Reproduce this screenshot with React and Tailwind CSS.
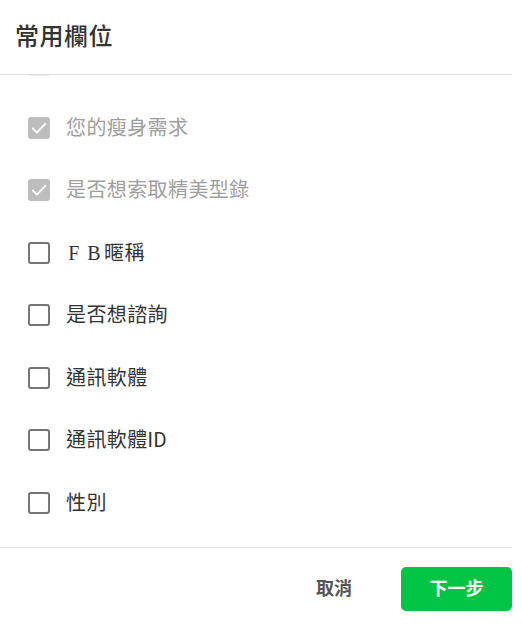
import React from "react";

const items = [
  { label: "", checked: true },
  { label: "您的瘦身需求", checked: true },
  { label: "是否想索取精美型錄", checked: true },
  { label: "FB", fb: true, checked: false },
  { label: "是否想諮詢", checked: false },
  { label: "通訊軟體", checked: false },
  { label: "通訊軟體ID", checked: false },
  { label: "性別", checked: false },
];

function Box({ checked, faint }) {
  if (checked) {
    return (
      <div className={"w-[22px] h-[22px] rounded-[3px] flex items-center justify-center shrink-0 " + (faint ? "bg-[#e8e8e8]" : "bg-[#bdbdbd]")}>
        <svg width="20" height="20" viewBox="0 0 24 24">
          <path d="M4.5 12.5l5 5 10-10.5" fill="none" stroke="#fff" strokeWidth="2.3" strokeLinecap="round" strokeLinejoin="round" />
        </svg>
      </div>
    );
  }
  return <div className="w-[22px] h-[22px] rounded-[3px] border-2 border-[#757575] shrink-0" />;
}

export default function App() {
  return (
    <div
      className="w-[512px] h-[630px] bg-white flex flex-col"
      style={{ fontFamily: "Roboto, 'Noto Sans CJK TC', sans-serif" }}
    >
      <div className="h-[75px] shrink-0 border-b border-[#e0e0e0] flex items-center pl-[15px]">
        <h1 className="text-[24px] font-medium text-[#333] leading-none tracking-[0.5px]">常用欄位</h1>
      </div>
      <div className="h-[473px] shrink-0 overflow-hidden border-b border-[#e0e0e0]">
        <div className="mt-[-41px] flex flex-col">
          {items.map((it, i) => (
            <div key={i} className="h-[62.5px] flex items-center pl-[28px] gap-[16px]">
              <Box checked={it.checked} faint={i === 0} />
              <span
                className={
                  "text-[20px] leading-none tracking-[0.4px] " +
                  (it.checked ? "text-[#9e9e9e]" : "text-[#333]")
                }
              >
                {it.fb ? (
                  <span className="inline-flex items-center">
                    <span className="inline-block w-[20px] text-center ml-[-2px]" style={{ fontFamily: "'Liberation Serif', serif" }}>F</span>
                    <span className="inline-block w-[20px] text-center" style={{ fontFamily: "'Liberation Serif', serif" }}>B</span>
                    <span>暱稱</span>
                  </span>
                ) : (
                  it.label
                )}
              </span>
            </div>
          ))}
        </div>
      </div>
      <div className="flex-1 flex items-center justify-end gap-[32px]">
        <button className="w-[70px] h-[44px] text-[18px] font-bold text-[#555] leading-none">取消</button>
        <button className="w-[111px] h-[44px] rounded-[5px] bg-[#00c544] text-white text-[18px] font-bold leading-none">
          下一步
        </button>
      </div>
    </div>
  );
}
